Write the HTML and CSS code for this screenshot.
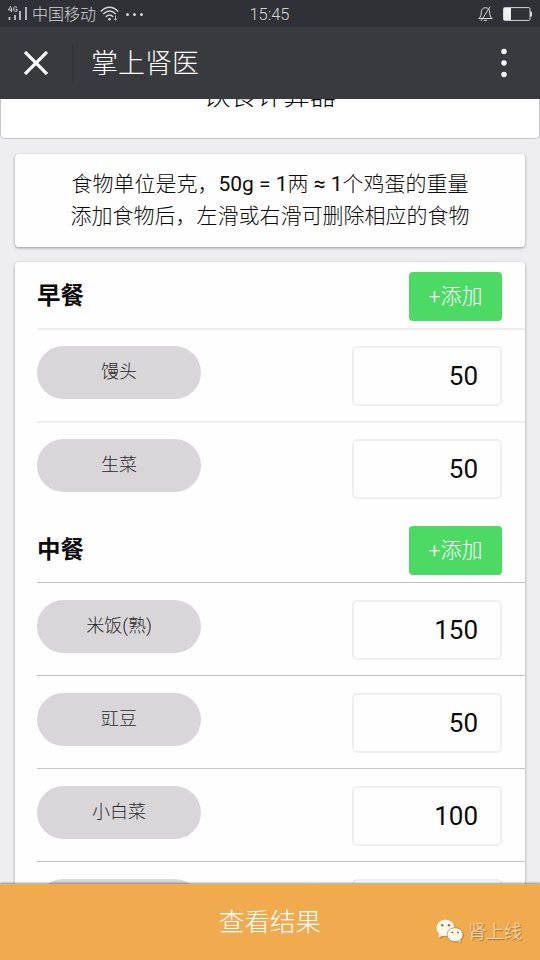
FILE: index.html
```html
<!DOCTYPE html>
<html lang="zh-CN">
<head>
<meta charset="utf-8">
<title>掌上肾医</title>
<link rel="stylesheet" href="styles.css">
</head>
<body>
<div class="status">
  <div class="status-left">
    <svg class="signal" width="20" height="16" viewBox="0 0 20 16">
      <path d="M1.5 12v3M7 10v5M12 6v9M18 2v13" stroke="#d5d5d7" stroke-width="1.6" fill="none"/>
      <path d="M2.8 1 L.5 5H4.5M3.4 2.5V7M9 2.5Q6 .2 5.8 4Q6 7.5 9 6V4.3H7.5" stroke="#d5d5d7" stroke-width="1" fill="none"/>
    </svg>
    <span class="carrier">中国移动</span>
    <svg class="wifi" width="19" height="16" viewBox="0 0 19 16" fill="none" stroke="#d5d5d7" stroke-width="1.3">
      <path d="M.8 5.5Q9.5-3 18.2 5.5M3.2 8Q9.5 2 15.8 8M5.8 10.8Q9.5 7.2 13.2 10.8"/>
      <circle cx="9.5" cy="13.2" r="1.3" fill="#d5d5d7" stroke="none"/>
      <path d="M15.5 9.5v4.5M13.8 12.6l1.7 1.6 1.7-1.6" stroke-width=".8"/>
    </svg>
    <span class="more"><i></i><i></i><i></i></span>
  </div>
  <div class="clock">15:45</div>
  <div class="status-right">
    <svg width="15" height="16" viewBox="0 0 15 16" fill="none" stroke="#d5d5d7" stroke-width="1">
      <path d="M.8 12.5H14.2C11.8 10.5 12 9 11.7 6C11.5 3.2 10 1.7 7.5 1.7S3.5 3.2 3.3 6C3 9 3.2 10.5.8 12.5ZM6 14.3H9M12 .8L3 15"/>
    </svg>
    <svg width="31" height="14" viewBox="0 0 31 14">
      <rect x="2.5" y=".6" width="26.5" height="12.8" rx="1.2" fill="none" stroke="#d5d5d7"/>
      <path d="M3 1H10V13H3Z" fill="#eeeeef"/>
      <rect x="29" y="4.5" width="2" height="5" fill="#d5d5d7"/>
    </svg>
  </div>
</div>
<header class="navbar">
  <svg class="close" width="24" height="24" viewBox="0 0 24 24"><path d="M1 1L23 23M23 1L1 23" stroke="#fff" stroke-width="3.2"/></svg>
  <span class="divider"></span>
  <h1 class="nav-title">掌上肾医</h1>
  <svg class="menu" width="6" height="30" viewBox="0 0 6 30" fill="#fff"><circle cx="3" cy="3.5" r="2.7"/><circle cx="3" cy="15" r="2.7"/><circle cx="3" cy="26.5" r="2.7"/></svg>
</header>
<main class="content">
  <section class="banner"><span>饮食计算器</span></section>
  <section class="card tips">
    <p>食物单位是克，<b>50g = 1</b>两 <b>≈ 1</b>个鸡蛋的重量</p>
    <p>添加食物后，左滑或右滑可删除相应的食物</p>
  </section>
  <section class="card meals">
    <div class="meal pale">
      <div class="meal-head"><h2>早餐</h2><button class="add">+添加</button></div>
      <div class="row"><span class="pill">馒头</span><span class="amount">50</span></div>
      <div class="row"><span class="pill">生菜</span><span class="amount">50</span></div>
    </div>
    <div class="meal">
      <div class="meal-head"><h2>中餐</h2><button class="add">+添加</button></div>
      <div class="row"><span class="pill">米饭(熟)</span><span class="amount">150</span></div>
      <div class="row"><span class="pill">豇豆</span><span class="amount">50</span></div>
      <div class="row"><span class="pill">小白菜</span><span class="amount">100</span></div>
      <div class="row"><span class="pill"></span><span class="amount"></span></div>
    </div>
  </section>
</main>
<footer class="result">
  <span>查看结果</span>
  <div class="watermark">
    <svg width="28" height="25" viewBox="0 0 28 25">
      <g fill="#8f6a38" opacity=".65" transform="translate(.8 .9)"><ellipse cx="9.5" cy="9" rx="9" ry="8.2"/><path d="M3 14L2.8 19L8 16Z"/><ellipse cx="19" cy="15.7" rx="8" ry="7"/><path d="M21 21L25 24L24.5 19Z"/></g>
      <path d="M3 14L2.8 18.8L8 16Z" fill="#fff8ec"/>
      <ellipse cx="9.5" cy="9" rx="9" ry="8.2" fill="#fff8ec"/>
      <path d="M20 21L24.6 23.6L24.5 19Z" fill="#fff8ec"/>
      <ellipse cx="19" cy="15.7" rx="8" ry="7" fill="#fff8ec" stroke="#b98a4b" stroke-width=".8"/>
      <g fill="#80705a"><circle cx="6.3" cy="6.3" r="1.2"/><circle cx="13" cy="6.3" r="1.2"/><circle cx="16.4" cy="13.5" r="1"/><circle cx="22" cy="13.5" r="1"/></g>
    </svg>
    <span>肾上线</span>
  </div>
</footer>
</body>
</html>
```
FILE: styles.css
```css
* { box-sizing: border-box; }
body {
  margin: 0;
  width: 540px;
  height: 960px;
  overflow: hidden;
  display: flex;
  flex-direction: column;
  background: #eeeef0;
  color: #0c0c0c;
  font-family: Roboto, "Noto Sans CJK SC", sans-serif;
  font-weight: 300;
}
h1, h2, p { margin: 0; }
.status {
  flex: none;
  height: 27px;
  padding: 0 8px 0 7px;
  display: grid;
  grid-template-columns: 1fr auto 1fr;
  align-items: center;
  background: #303136;
  color: #d5d5d7;
}
.status-left, .status-right { display: flex; align-items: center; }
.status-left { height: 27px; }
.signal { margin: 0 4px 2px 1px; }
.carrier { font-size: 16px; line-height: 27px; }
.wifi { margin-left: 4px; }
.more { display: flex; gap: 4px; margin-left: 7px; }
.more i { width: 3px; height: 3px; border-radius: 50%; background: #d5d5d7; }
.clock { font-size: 16.5px; font-weight: 300; line-height: 27px; padding-top: 1px; }
.status-right { justify-content: flex-end; gap: 8px; }
.navbar {
  flex: none;
  height: 72px;
  padding: 0 33px 0 24px;
  display: flex;
  align-items: center;
  background: #393a3e;
  color: #fff;
}
.divider { width: 1px; height: 36px; margin: 0 18px 0 24px; background: #303135; }
.nav-title { font-size: 27px; font-weight: 300; line-height: 40px; padding-top: 2px; }
.menu { margin-left: auto; }
.content { flex: 1; min-height: 0; overflow: hidden; }
.banner {
  height: 40px;
  overflow: hidden;
  display: flex;
  justify-content: center;
  align-items: flex-end;
  background: #fff;
  border: 1px solid #c6c6c9;
  border-top: 0;
  border-radius: 0 0 5px 5px;
  font-size: 26.5px;
}
.banner span { line-height: 40px; padding-bottom: 22px; }
.card {
  margin: 15px 15px 0;
  background: #fefefe;
  border-radius: 4px;
  box-shadow: 0 1px 3px rgba(0, 0, 0, .38);
}
.tips {
  height: 93px;
  padding-top: 14px;
  text-align: center;
  font-size: 21px;
  line-height: 32px;
}
.tips b { font-weight: 400; }
.meals { padding-left: 22px; }
.meal-head, .row {
  display: flex;
  justify-content: space-between;
  padding-right: 23px;
  border-bottom: 1px solid #c5c5c7;
}
.meal-head { height: 67px; padding-top: 10px; }
.meal-head h2 { font-size: 23.5px; font-weight: 700; line-height: 48px; }
.add {
  width: 93px;
  height: 49px;
  padding: 0;
  border: 0;
  border-radius: 4px;
  background: #4cda64;
  color: #fff;
  font: inherit;
  font-size: 21px;
  line-height: 47px;
}
.row { height: 93px; padding-top: 17px; }
.pale .meal-head { height: 68px; }
.pale .row { padding-top: 16px; }
.pale .meal-head, .pale .row { border-bottom: 2px solid #ededed; }
.meal .row:last-child { border-bottom: 0; }
.pill {
  width: 164px;
  height: 53px;
  border-radius: 27px;
  background: #d8d6d9;
  color: #28282a;
  text-align: center;
  font-size: 18px;
  line-height: 52px;
}
.amount {
  width: 150px;
  height: 60px;
  padding-right: 22px;
  border: 2px solid #efeff0;
  border-radius: 5px;
  text-align: right;
  font-size: 26px;
  font-weight: 400;
  line-height: 56px;
}
.result {
  flex: none;
  height: 76px;
  position: relative;
  display: flex;
  justify-content: center;
  background: #f0ab4f;
  box-shadow: 0 -1px 2px rgba(0, 0, 0, .4);
  color: #fff;
  font-size: 25.5px;
  line-height: 76px;
}
.watermark {
  position: absolute;
  right: 18px;
  top: 35px;
  display: flex;
  align-items: center;
  gap: 4px;
  color: #fbdfb6;
  font-size: 18px;
  line-height: 25px;
  text-shadow: 1px 1px 1px #94703f;
}
```
